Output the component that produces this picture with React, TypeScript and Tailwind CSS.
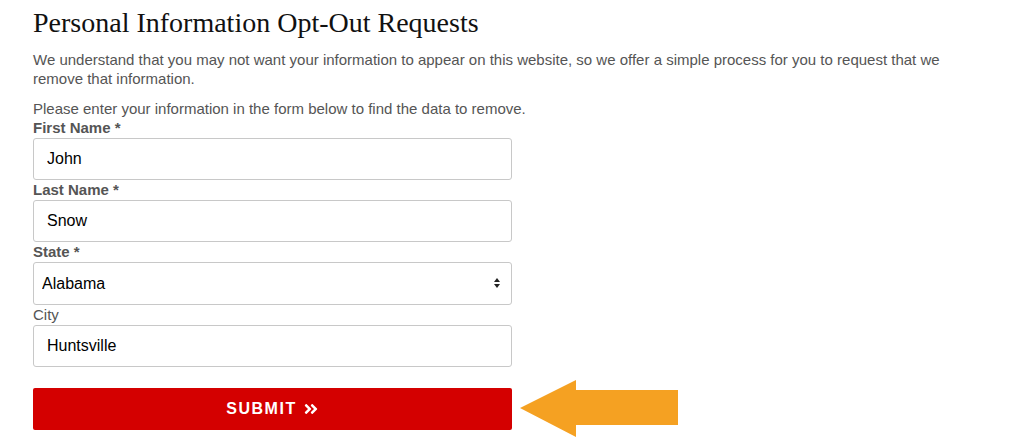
import { FaAngleDoubleRight } from "react-icons/fa"

const FIELDS = [
  { label: "First Name *", value: "John", bold: true },
  { label: "Last Name *", value: "Snow", bold: true },
]

function Label({ text, bold = true }: { text: string; bold?: boolean }) {
  return (
    <label className={`block text-[15px] leading-[20px] text-[#555] ${bold ? "font-bold" : "font-normal"}`}>
      {text}
    </label>
  )
}

function TextField({ value }: { value: string }) {
  return (
    <input
      readOnly
      value={value}
      className="block h-[42px] w-[479px] rounded-[3px] border border-[#c8c8c8] bg-white px-[13px] text-[16px] text-black outline-none"
    />
  )
}

export default function App() {
  return (
    <div className="min-h-[444px] bg-white px-[33px] pt-[5px] font-['Liberation_Sans',Arial,sans-serif]">
      {/* Heading */}
      <h1 className="font-['Liberation_Serif','Times_New_Roman',serif] text-[28px] leading-[36px] text-[#111]">
        Personal Information Opt-Out Requests
      </h1>

      <p className="mt-[9px] max-w-[920px] text-[15px] leading-[19px] text-[#555]">
        We understand that you may not want your information to appear on this website, so we offer a simple process for you to request that we remove that information.
      </p>
      <p className="mt-[11px] text-[15px] leading-[19px] text-[#555]">
        Please enter your information in the form below to find the data to remove.
      </p>

      {/* Form */}
      <form className="flex flex-col">
        {FIELDS.map(({ label, value, bold }) => (
          <div key={label}>
            <Label text={label} bold={bold} />
            <TextField value={value} />
          </div>
        ))}

        <div>
          <Label text="State *" />
          <div className="relative w-[479px]">
            <select
              defaultValue="Alabama"
              className="block h-[43px] w-full appearance-none rounded-[3px] border border-[#c8c8c8] bg-white px-[8px] text-[16px] text-black outline-none"
            >
              <option>Alabama</option>
              <option>Alaska</option>
              <option>Arizona</option>
            </select>
            <svg className="pointer-events-none absolute right-[11px] top-[15px]" width="8" height="12" viewBox="0 0 8 12">
              <path d="M4 1 L7 5 L1 5 Z" fill="#222" />
              <path d="M4 11 L7 7 L1 7 Z" fill="#222" />
            </svg>
          </div>
        </div>

        <div>
          <Label text="City" bold={false} />
          <TextField value="Huntsville" />
        </div>

        <div className="mt-[13px] flex items-center gap-[8px]">
          <button
            type="button"
            className="flex h-[42px] w-[479px] items-center justify-center gap-[6px] rounded-[2px] bg-[#d40000] text-[16px] font-bold tracking-[1.5px] text-white"
          >
            SUBMIT
            <FaAngleDoubleRight className="h-[16px] w-[16px]" />
          </button>
          <svg width="158" height="57" viewBox="0 0 158 57">
            <polygon points="0,28 56,0 56,10 158,10 158,45 56,45 56,57" fill="#f5a122" />
          </svg>
        </div>
      </form>
    </div>
  )
}
